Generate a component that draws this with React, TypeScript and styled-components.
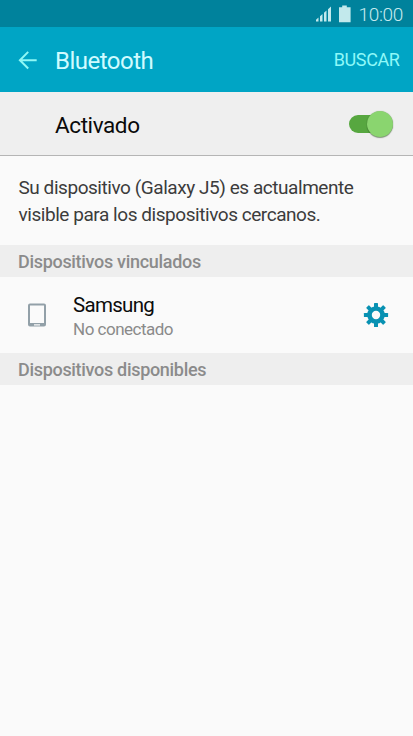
import React from 'react';
import styled, { createGlobalStyle } from 'styled-components';

const GlobalStyle = createGlobalStyle`
  * { box-sizing: border-box; }
  body { margin: 0; background: #fafafa; font-family: Roboto, sans-serif; }
`;

const Screen = styled.main`
  display: flex;
  flex-direction: column;
  width: 413px;
  height: 736px;
  overflow: hidden;
  background: #fafafa;
`;

const StatusBar = styled.div`
  display: flex;
  align-items: center;
  justify-content: flex-end;
  flex: none;
  height: 27px;
  padding: 2px 10px 0 0;
  background: #00829c;
`;

const StatusIcons = styled.svg`
  display: block;
  margin: -2px 7px 0 0;
`;

const Clock = styled.time`
  font-size: 19px;
  line-height: 24px;
  font-weight: 300;
  letter-spacing: -0.35px;
  color: #c6eaee;
`;

const AppBar = styled.header`
  display: flex;
  align-items: center;
  flex: none;
  height: 65px;
  padding: 2px 13.500px 0 18px;
  background: #00a5c5;
`;

const IconButton = styled.button`
  display: flex;
  flex: none;
  padding: 0;
  border: 0;
  background: none;
`;

const Title = styled.h1`
  flex: 1;
  margin: 0 0 0 17px;
  font-size: 24px;
  line-height: 30px;
  font-weight: 400;
  letter-spacing: -0.5px;
  color: #d0fbff;
`;

const ScanButton = styled.button`
  padding: 0 0 1px;
  border: 0;
  background: none;
  font: 400 18px/24px Roboto, sans-serif;
  letter-spacing: -0.4px;
  color: #8ff8f8;
`;

const PowerRow = styled.section`
  display: flex;
  align-items: center;
  justify-content: space-between;
  flex: none;
  height: 64px;
  padding: 1px 20px 0 55px;
  border-bottom: 1px solid #b5b5b5;
  background: #efefef;
`;

const PowerLabel = styled.span`
  padding-top: 1px;
  font-size: 22.5px;
  line-height: 28px;
  letter-spacing: -0.4px;
  color: #0a0a0a;
`;

const Switch = styled.button`
  display: flex;
  align-items: center;
  width: 44px;
  height: 26px;
  padding: 0;
  border: 0;
  background: none;
`;

const Track = styled.span`
  display: flex;
  align-items: center;
  justify-content: flex-end;
  width: 44px;
  height: 18px;
  border-radius: 9px;
  background: linear-gradient(to right, #57a740 30px, transparent 30px);
`;

const Thumb = styled.span`
  flex: none;
  width: 26px;
  height: 26px;
  border-radius: 50%;
  background: #8ad56f;
  box-shadow: 0 1px 1px rgba(40, 70, 30, 0.5), 0 0 1px rgba(40, 70, 30, 0.4);
`;

const Info = styled.p`
  flex: none;
  height: 89px;
  margin: 0;
  padding: 19px 18px 0 18.500px;
  font-size: 19px;
  line-height: 26.5px;
  letter-spacing: -0.45px;
  color: #3c3c3c;
`;

const InfoLine = styled.span`
  display: block;
  white-space: nowrap;
`;

const SectionTitle = styled.h2`
  flex: none;
  height: 32px;
  margin: 0;
  padding: 1px 18px 0;
  font-size: 18px;
  line-height: 32px;
  font-weight: 500;
  letter-spacing: -0.31px;
  color: #8b8b8b;
  background: #eeeeee;
`;

const DeviceRow = styled.section`
  display: flex;
  align-items: center;
  flex: none;
  height: 76px;
  padding: 0 24px 0 27px;
`;

const DeviceText = styled.div`
  flex: 1;
  margin-left: 26px;
  padding-top: 3px;
`;

const DeviceName = styled.div`
  font-size: 20.5px;
  line-height: 25px;
  letter-spacing: -0.7px;
  color: #0c0c0c;
`;

const DeviceState = styled.div`
  font-size: 17px;
  line-height: 23px;
  letter-spacing: -0.5px;
  color: #8a8a8a;
`;

const teeth = [0, 45, 90, 135, 180, 225, 270, 315];

export default function App() {
  return (
    <>
      <GlobalStyle />
      <Screen>
        <StatusBar>
          <StatusIcons width="36" height="18" viewBox="0 0 36 18" fill="#c2e9ec" aria-hidden="true">
            <path d="M0 16.500v-1.700l2.500-2.200v3.900zM4 16.500v-5.200l2.500-2.200v7.400zM8 16.500V7.800l2.500-2.200v10.900zM12 16.500V4.200L15 1.500v15z" />
            <path d="M23 2.300h3.200V.6h4.600v1.700h3.800v15H23z" />
          </StatusIcons>
          <Clock>10:00</Clock>
        </StatusBar>
        <AppBar>
          <IconButton aria-label="Atrás">
            <svg width="20" height="20" viewBox="0 0 20 20" fill="none" stroke="#8ff8f5" strokeWidth="2">
              <path d="M18.700 9.200H2.500M10.200.9 1.900 9.200l8.300 8.300" />
            </svg>
          </IconButton>
          <Title>Bluetooth</Title>
          <ScanButton>BUSCAR</ScanButton>
        </AppBar>
        <PowerRow>
          <PowerLabel>Activado</PowerLabel>
          <Switch role="switch" aria-checked="true" aria-label="Bluetooth">
            <Track>
              <Thumb />
            </Track>
          </Switch>
        </PowerRow>
        <Info>
          <InfoLine>Su dispositivo (Galaxy J5) es actualmente</InfoLine>
          <InfoLine>visible para los dispositivos cercanos.</InfoLine>
        </Info>
        <SectionTitle>Dispositivos vinculados</SectionTitle>
        <DeviceRow>
          <svg width="20" height="26" viewBox="0 0 20 26" aria-hidden="true">
            <path
              fill="#92a0a8"
              fillRule="evenodd"
              d="M3 1.500h14a2 2 0 0 1 2 2v19a2 2 0 0 1-2 2H3a2 2 0 0 1-2-2v-19a2 2 0 0 1 2-2zM3 3.500v17.500h14V3.500zM7 22.200v1.300h6v-1.300z"
            />
          </svg>
          <DeviceText>
            <DeviceName>Samsung</DeviceName>
            <DeviceState>No conectado</DeviceState>
          </DeviceText>
          <IconButton aria-label="Ajustes">
            <svg width="26" height="26" viewBox="-13 -13 26 26">
              <circle r="6.500" fill="none" stroke="#0891b2" strokeWidth="4.600" />
              {teeth.map((angle) => (
                <path key={angle} d="M-2-7V-11.500q0-.6.6-.6h2.800q.6 0 .6.600V-7z" fill="#0891b2" transform={`rotate(${angle})`} />
              ))}
            </svg>
          </IconButton>
        </DeviceRow>
        <SectionTitle>Dispositivos disponibles</SectionTitle>
      </Screen>
    </>
  );
}
